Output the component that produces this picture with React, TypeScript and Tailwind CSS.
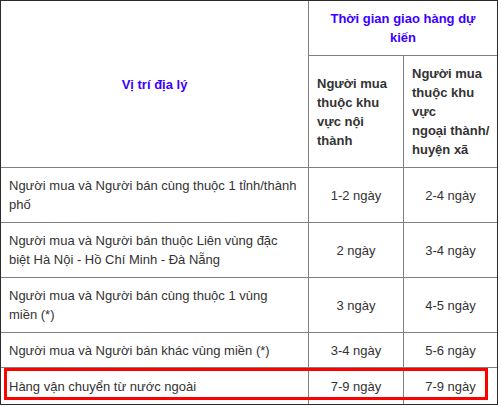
import React from "react";

type Row = {
  place: string[];
  inner: string;
  outer: string;
  h: string;
};

const rows: Row[] = [
  { place: ["Người mua và Người bán cùng thuộc 1 tỉnh/thành", "phố"], inner: "1-2 ngày", outer: "2-4 ngày", h: "h-[54px]" },
  { place: ["Người mua và Người bán thuộc Liên vùng đặc", "biệt Hà Nội - Hồ Chí Minh - Đà Nẵng"], inner: "2 ngày", outer: "3-4 ngày", h: "h-[54px]" },
  { place: ["Người mua và Người bán cùng thuộc 1 vùng", "miền (*)"], inner: "3 ngày", outer: "4-5 ngày", h: "h-[54px]" },
  { place: ["Người mua và Người bán khác vùng miền (*)"], inner: "3-4 ngày", outer: "5-6 ngày", h: "h-[34px]" },
  { place: ["Hàng vận chuyển từ nước ngoài"], inner: "7-9 ngày", outer: "7-9 ngày", h: "h-[36px]" },
];

const Lines = ({ lines }: { lines: string[] }) => (
  <div>
    {lines.map((l) => (
      <div key={l} className="whitespace-nowrap">
        {l}
      </div>
    ))}
  </div>
);

export default function App() {
  return (
    <div className="bg-white min-h-[407px] font-['Liberation_Sans',Arial,sans-serif] text-[13px] leading-[19px] text-[#333333]">
      <div className="relative w-[498px] border border-[#2b2b2b]">
        <div className="grid grid-cols-[307px_94px_93px] gap-px bg-[#7f7f7f]">
          {/* header */}
          <div className="row-span-2 bg-white flex items-center justify-center font-bold text-[#3c00ff]">
            Vị trí địa lý
          </div>
          <div className="col-span-2 h-[54px] bg-white flex items-center justify-center text-center font-bold text-[#3c00ff]">
            <Lines lines={["Thời gian giao hàng dự", "kiến"]} />
          </div>
          <div className="h-[111px] bg-white flex items-center px-2 font-bold">
            <Lines lines={["Người mua", "thuộc khu", "vực nội", "thành"]} />
          </div>
          <div className="h-[111px] bg-white flex items-center px-2 font-bold">
            <Lines lines={["Người mua", "thuộc khu", "vực", "ngoại thành/", "huyện xã"]} />
          </div>

          {/* body */}
          {rows.map((r) => (
            <React.Fragment key={r.place[0]}>
              <div className={`${r.h} bg-white flex items-center px-2`}>
                <Lines lines={r.place} />
              </div>
              <div className={`${r.h} bg-white flex items-center justify-center`}>{r.inner}</div>
              <div className={`${r.h} bg-white flex items-center justify-center`}>{r.outer}</div>
            </React.Fragment>
          ))}
        </div>

        {/* highlight around the last row */}
        <div className="absolute left-[3px] top-[367px] w-[484px] h-[32px] border-[3px] border-[#ff0000] pointer-events-none" />
      </div>
    </div>
  );
}
